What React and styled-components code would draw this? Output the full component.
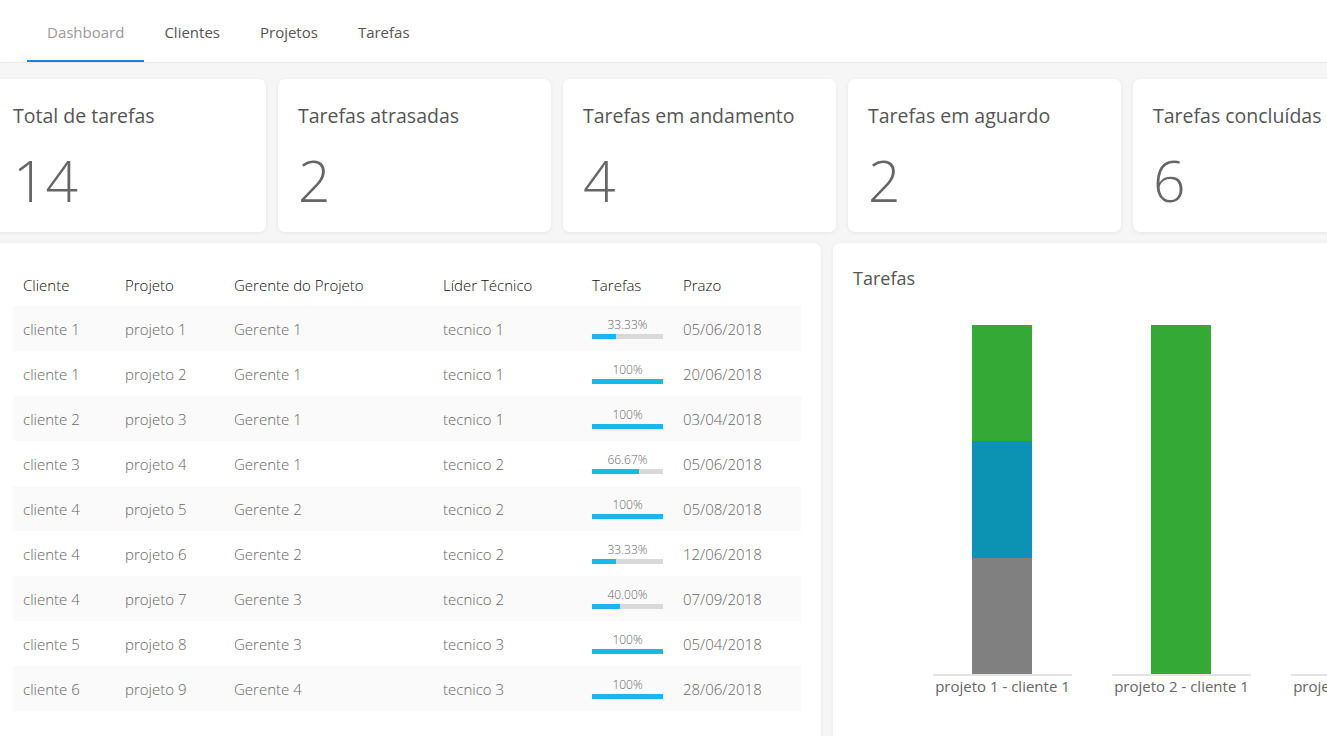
import React from 'react'
import styled, { createGlobalStyle } from 'styled-components'

const GlobalStyle = createGlobalStyle`
  body {
    margin: 0;
    background: #f6f6f6;
    font-family: 'Open Sans', 'Noto Sans', Arial, sans-serif;
    overflow: hidden;
  }
`

// #region Styled Components
const Page = styled.div`
  width: 1327px;
  height: 736px;
  overflow: hidden;
`

const Nav = styled.nav`
  display: flex;
  height: 62px;
  padding-left: 27px;
  background: #fff;
  border-bottom: 1px solid #e8e8e8;
`

const Tab = styled.a`
  display: flex;
  align-items: center;
  padding: 4px 20px 0;
  font-size: 15px;
  color: ${(p) => (p.$active ? '#9a9a9a' : '#555')};
  border-bottom: 2px solid ${(p) => (p.$active ? '#1a80f0' : 'transparent')};
  text-decoration: none;
`

const Content = styled.main`
  width: 1413px;
  margin-left: -7px;
  padding-top: 16px;
`

const Cards = styled.section`
  display: grid;
  grid-template-columns: repeat(5, 273px);
  gap: 12px;
`

const Card = styled.div`
  height: 153px;
  box-sizing: border-box;
  padding: 23px 20px 0;
  background: #fff;
  border-radius: 7px;
  box-shadow: 0 1px 4px rgba(0, 0, 0, 0.07);
`

const CardTitle = styled.div`
  font-size: 19.5px;
  color: #555;
  line-height: 28px;
`

const CardValue = styled.div`
  margin-top: 16px;
  font-size: 57px;
  font-weight: 300;
  color: #666;
  line-height: 68px;
`

const Row = styled.section`
  display: grid;
  grid-template-columns: 828px 573px;
  gap: 12px;
  margin-top: 11px;
`

const Panel = styled.div`
  height: 520px;
  box-sizing: border-box;
  padding: ${(p) => p.$padding};
  background: #fff;
  border-radius: 7px;
  box-shadow: 0 1px 4px rgba(0, 0, 0, 0.07);
`

const Table = styled.table`
  width: 788px;
  border-collapse: collapse;
  table-layout: fixed;
  font-size: 15px;

  th {
    height: 42px;
    padding: 0 10px;
    text-align: left;
    font-weight: 300;
    color: #111;
  }
  td {
    height: 45px;
    padding: 0 10px;
    font-weight: 300;
    color: #666;
  }
  tbody tr:nth-child(odd) {
    background: #fafafa;
  }
`

const Progress = styled.div`
  width: 71px;
  text-align: center;
  font-size: 12px;
  font-weight: 300;
  color: #666;
  line-height: 14px;
`

const Track = styled.div`
  height: 5px;
  margin-top: 2px;
  background: #d9d9d9;
`

const Fill = styled.div`
  height: 100%;
  background: #1ab8ea;
`

const ChartTitle = styled.div`
  font-size: 18px;
  color: #555;
  line-height: 24px;
`

const Chart = styled.div`
  display: flex;
  gap: 40px;
  margin: 35px 0 0 80px;
`

const Category = styled.div`
  flex: 0 0 139px;
  display: flex;
  flex-direction: column;
  align-items: center;
`

const Plot = styled.div`
  height: 349px;
  width: 100%;
  display: flex;
  flex-direction: column;
  justify-content: flex-end;
  align-items: center;
  border-bottom: 2px solid #e3e3e3;
`

const Segment = styled.div`
  width: 60px;
  margin-left: -1px;
  background: ${(p) => p.$color};
`

const Label = styled.div`
  font-size: 15px;
  color: #666;
  white-space: nowrap;
`
// #endregion

const stats = [
  ['Total de tarefas', 14],
  ['Tarefas atrasadas', 2],
  ['Tarefas em andamento', 4],
  ['Tarefas em aguardo', 2],
  ['Tarefas concluídas', 6],
]

const projects = [
  ['cliente 1', 'projeto 1', 'Gerente 1', 'tecnico 1', 33.33, '33.33%', '05/06/2018'],
  ['cliente 1', 'projeto 2', 'Gerente 1', 'tecnico 1', 100, '100%', '20/06/2018'],
  ['cliente 2', 'projeto 3', 'Gerente 1', 'tecnico 1', 100, '100%', '03/04/2018'],
  ['cliente 3', 'projeto 4', 'Gerente 1', 'tecnico 2', 66.67, '66.67%', '05/06/2018'],
  ['cliente 4', 'projeto 5', 'Gerente 2', 'tecnico 2', 100, '100%', '05/08/2018'],
  ['cliente 4', 'projeto 6', 'Gerente 2', 'tecnico 2', 33.33, '33.33%', '12/06/2018'],
  ['cliente 4', 'projeto 7', 'Gerente 3', 'tecnico 2', 40, '40.00%', '07/09/2018'],
  ['cliente 5', 'projeto 8', 'Gerente 3', 'tecnico 3', 100, '100%', '05/04/2018'],
  ['cliente 6', 'projeto 9', 'Gerente 4', 'tecnico 3', 100, '100%', '28/06/2018'],
]

const colors = { done: '#35a936', doing: '#0c93b3', waiting: '#808080' }
const unit = 116.33

const chartData = [
  { label: 'projeto 1 - cliente 1', parts: [['done', 1], ['doing', 1], ['waiting', 1]] },
  { label: 'projeto 2 - cliente 1', parts: [['done', 3]] },
  { label: 'projeto 3 - cliente 2', parts: [['done', 2]] },
]

const widths = ['102px', '109px', '209px', '149px', '91px', '128px']
const headers = ['Cliente', 'Projeto', 'Gerente do Projeto', 'Líder Técnico', 'Tarefas', 'Prazo']

const App = () => {
  return (
    <Page>
      <GlobalStyle />
      <Nav>
        <Tab href="##" $active>Dashboard</Tab>
        <Tab href="##">Clientes</Tab>
        <Tab href="##">Projetos</Tab>
        <Tab href="##">Tarefas</Tab>
      </Nav>

      <Content>
        <Cards>
          {stats.map(([title, value]) => (
            <Card key={title}>
              <CardTitle>{title}</CardTitle>
              <CardValue>{value}</CardValue>
            </Card>
          ))}
        </Cards>

        <Row>
          <Panel $padding="21px 20px">
            <Table>
              <colgroup>
                {widths.map((w, i) => (
                  <col key={i} style={{ width: w }} />
                ))}
              </colgroup>
              <thead>
                <tr>
                  {headers.map((h) => (
                    <th key={h}>{h}</th>
                  ))}
                </tr>
              </thead>
              <tbody>
                {projects.map(([cli, proj, ger, tec, pct, txt, prazo]) => (
                  <tr key={proj}>
                    <td>{cli}</td>
                    <td>{proj}</td>
                    <td>{ger}</td>
                    <td>{tec}</td>
                    <td>
                      <Progress>
                        {txt}
                        <Track>
                          <Fill style={{ width: `${pct}%` }} />
                        </Track>
                      </Progress>
                    </td>
                    <td>{prazo}</td>
                  </tr>
                ))}
              </tbody>
            </Table>
          </Panel>

          <Panel $padding="23px 20px">
            <ChartTitle>Tarefas</ChartTitle>
            <Chart>
              {chartData.map((c) => (
                <Category key={c.label}>
                  <Plot>
                    {c.parts.map(([k, v], i) => (
                      <Segment key={i} $color={colors[k]} style={{ height: v * unit }} />
                    ))}
                  </Plot>
                  <Label>{c.label}</Label>
                </Category>
              ))}
            </Chart>
          </Panel>
        </Row>
      </Content>
    </Page>
  )
}

export default App
